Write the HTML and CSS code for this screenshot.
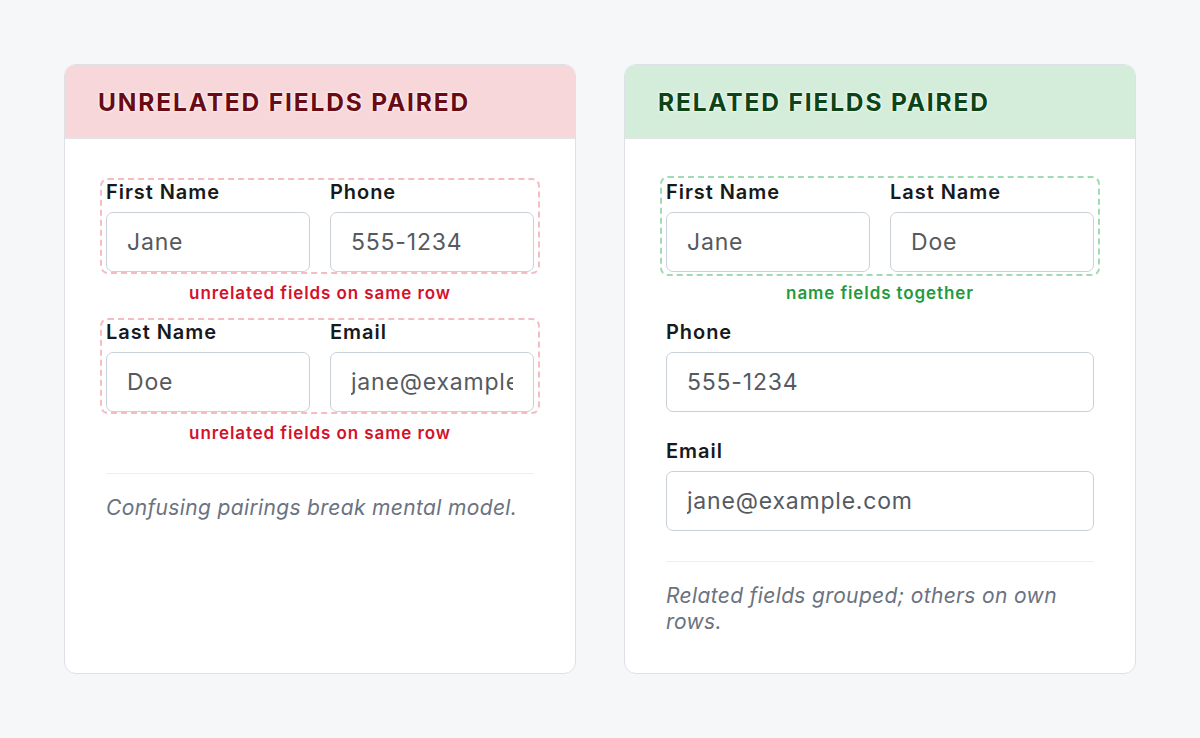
FILE: index.html
```html
<!DOCTYPE html>
<html>
<head lang="en">
    <meta charset="UTF-8">
    <title>Field pairing</title>
    <link rel="stylesheet" href="styles.css">
</head>
<body>
<div class="compare">
    <div class="card bad">
        <div class="card-head">UNRELATED FIELDS PAIRED</div>
        <div class="card-body">
            <div class="pair">
                <div class="field">
                    <label>First Name</label>
                    <input type="text" value="Jane">
                </div>
                <div class="field">
                    <label>Phone</label>
                    <input type="text" value="555-1234">
                </div>
            </div>
            <p class="note">unrelated fields on same row</p>
            <div class="pair">
                <div class="field">
                    <label>Last Name</label>
                    <input type="text" value="Doe">
                </div>
                <div class="field">
                    <label>Email</label>
                    <input type="text" value="jane@example.com">
                </div>
            </div>
            <p class="note">unrelated fields on same row</p>
            <hr>
            <p class="summary">Confusing pairings break mental model.</p>
        </div>
    </div>
    <div class="card good">
        <div class="card-head">RELATED FIELDS PAIRED</div>
        <div class="card-body">
            <div class="pair">
                <div class="field">
                    <label>First Name</label>
                    <input type="text" value="Jane">
                </div>
                <div class="field">
                    <label>Last Name</label>
                    <input type="text" value="Doe">
                </div>
            </div>
            <p class="note">name fields together</p>
            <div class="field single">
                <label>Phone</label>
                <input type="text" value="555-1234">
            </div>
            <div class="field single">
                <label>Email</label>
                <input type="text" value="jane@example.com">
            </div>
            <hr>
            <p class="summary">Related fields grouped; others on own rows.</p>
        </div>
    </div>
</div>
</body>
</html>
```

FILE: styles.css
```css
* {
    margin: 0;
    padding: 0;
    box-sizing: border-box;
}

body {
    background: #f6f7f9;
    font-family: Inter, "Noto Sans", sans-serif;
    color: #1b1d21;
}

.compare {
    display: flex;
    gap: 48px;
    padding: 64px;
}

.card {
    width: 512px;
    height: 610px;
    background: #fff;
    border: 1px solid #dde1e6;
    border-radius: 12px;
    overflow: hidden;
}

.card-head {
    height: 74px;
    padding: 0 33px;
    display: flex;
    align-items: center;
    font-size: 24.5px;
    font-weight: 700;
    letter-spacing: 1.85px;
    border-bottom: 1px solid #e3e5e8;
    text-shadow: 0 0 3px #fff, 0 0 2px #fff;
}

.bad .card-head {
    background: #f8d7da;
    color: #6a0a12;
}

.good .card-head {
    background: #d4edda;
    color: #0c4416;
}

.card-body {
    padding: 39px 41px 38px;
}

/* dashed box round a row of two fields */
.pair {
    display: flex;
    gap: 20px;
    margin: 0 -6px;
    padding: 0 4px;
    border: 2px dashed #f6bcc3;
    border-radius: 8px;
}

.good .pair {
    margin-top: -2px;
    padding: 2px 4px;
    border-color: #a0dbb3;
}

.field {
    flex: 1;
    min-width: 0;
}

.field label {
    display: block;
    height: 24px;
    line-height: 24px;
    margin-bottom: 8px;
    font-size: 20px;
    font-weight: 600;
    letter-spacing: 0.95px;
    color: #17191c;
}

.field input {
    display: block;
    width: 100%;
    height: 60px;
    padding: 0 20px;
    border: 1.5px solid #c9d0d8;
    border-radius: 7px;
    background: #fff;
    font-family: Inter, "Noto Sans", sans-serif;
    font-size: 23px;
    letter-spacing: 0.8px;
    color: #555a60;
    outline: none;
}

.note {
    margin: 9px 0 15px;
    height: 20px;
    line-height: 20px;
    text-align: center;
    font-size: 17px;
    font-weight: 600;
    letter-spacing: 0.9px;
}

.bad .note {
    color: #d4112b;
}

.good .note {
    margin: 7px 0 17px;
    color: #1f9b3e;
}

.field.single + .field.single {
    margin-top: 27px;
}

hr {
    border: 0;
    border-top: 1.5px solid #eceef1;
    margin: 30px 0 21px;
}

.summary {
    font-size: 21px;
    font-style: italic;
    line-height: 26px;
    color: #6b7280;
    letter-spacing: 0.35px;
}
```
